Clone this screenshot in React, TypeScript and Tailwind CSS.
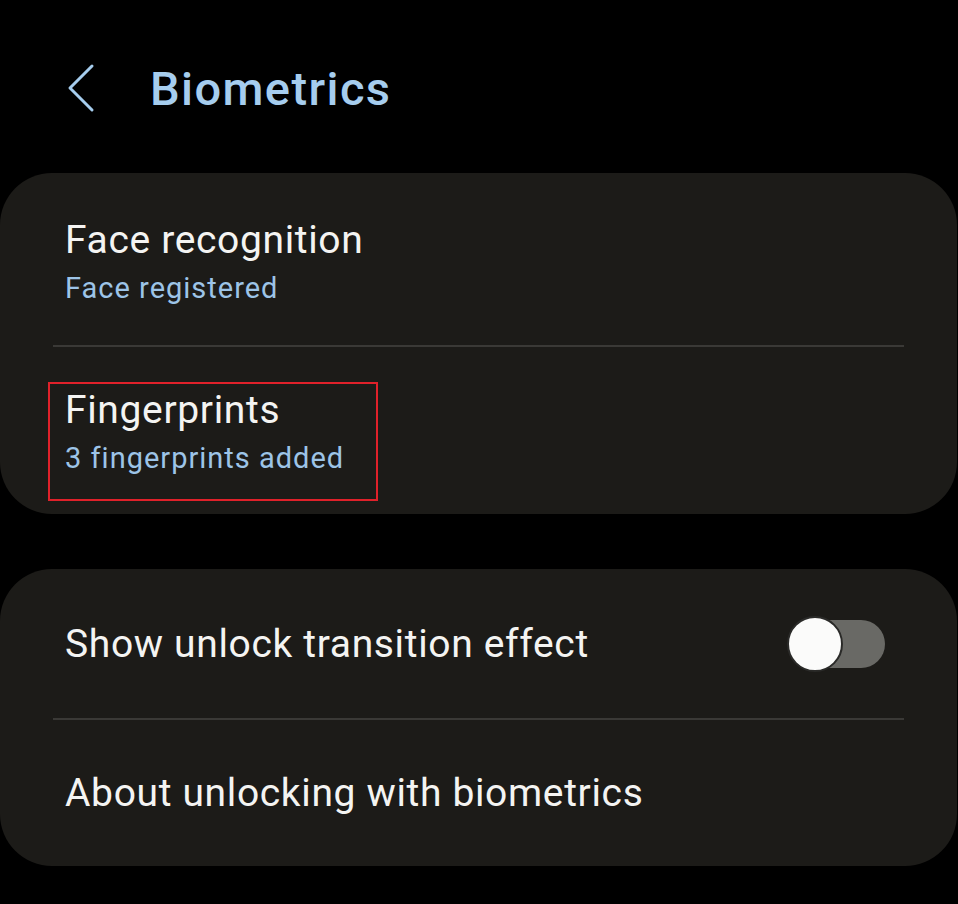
import React, { useState } from "react";

type Row = { id: string; title: string; subtitle?: string };

function BackChevron() {
  return (
    <svg width="30" height="52" viewBox="0 0 30 52" fill="none" aria-hidden="true">
      <path d="M25 4 L3 26 L25 48" stroke="#a6cdee" strokeWidth="3" strokeLinecap="round" strokeLinejoin="round" />
    </svg>
  );
}

function Toggle({ on, onChange }: { on: boolean; onChange: () => void }) {
  return (
    <button
      type="button"
      role="switch"
      aria-checked={on}
      onClick={onChange}
      className="relative h-[52px] w-[98px] shrink-0"
    >
      <span className="absolute right-0 top-[2px] h-[48px] w-[86px] rounded-full bg-[#696965]" />
      <span className="absolute left-0 top-0 h-[56px] w-[56px] -translate-y-[2px] rounded-full border-2 border-[#2a2a28] bg-[#fbfbfa]" />
    </button>
  );
}

function Divider() {
  return <div className="mx-[53px] h-[2px] bg-[#3a3936]" />;
}

function RowText({ row }: { row: Row }) {
  return (
    <>
      <div className="text-[39px] leading-[46px] tracking-[0.65px]">{row.title}</div>
      {row.subtitle && (
        <div className="mt-[8px] text-[29px] leading-[34px] tracking-[1px] text-[#9dc4e7]">{row.subtitle}</div>
      )}
    </>
  );
}

export default function App() {
  const [transition, setTransition] = useState(false);

  const biometrics: Row[] = [
    { id: "face", title: "Face recognition", subtitle: "Face registered" },
    { id: "finger", title: "Fingerprints", subtitle: "3 fingerprints added" },
  ];

  return (
    <div className="min-h-[904px] w-[958px] bg-black font-['Roboto',sans-serif] text-[#f4f4f2]">
      {/* header */}
      <header className="flex h-[173px] items-start pt-[62px]">
        <button type="button" className="ml-[67px] flex h-[52px] w-[30px] items-center" aria-label="Back">
          <BackChevron />
        </button>
        <h1 className="ml-[53px] mt-[-1px] text-[47px] font-medium leading-[56px] tracking-[1.4px] text-[#a6cdee]">
          Biometrics
        </h1>
      </header>

      {/* biometric entries */}
      <section className="mr-px rounded-[52px] bg-[#1c1b18]">
        <div className="flex h-[172px] flex-col justify-center px-[65px] pt-[3px]">
          <RowText row={biometrics[0]} />
        </div>
        <Divider />
        <div className="h-[167px] px-[48px] pt-[35px]">
          <div className="h-[119px] w-[330px] border-2 border-[#e0212a] px-[15px] pt-[3px]">
            <RowText row={biometrics[1]} />
          </div>
        </div>
      </section>

      {/* lock screen options */}
      <section className="mr-px mt-[55px] rounded-[52px] bg-[#1c1b18]">
        <div className="flex h-[149px] items-center justify-between pl-[65px] pr-[72px]">
          <span className="text-[39px] leading-[46px] tracking-[0.65px]">Show unlock transition effect</span>
          <Toggle on={transition} onChange={() => setTransition((v) => !v)} />
        </div>
        <Divider />
        <div className="flex h-[146px] items-center px-[65px]">
          <span className="text-[39px] leading-[46px] tracking-[0.65px]">About unlocking with biometrics</span>
        </div>
      </section>
    </div>
  );
}
